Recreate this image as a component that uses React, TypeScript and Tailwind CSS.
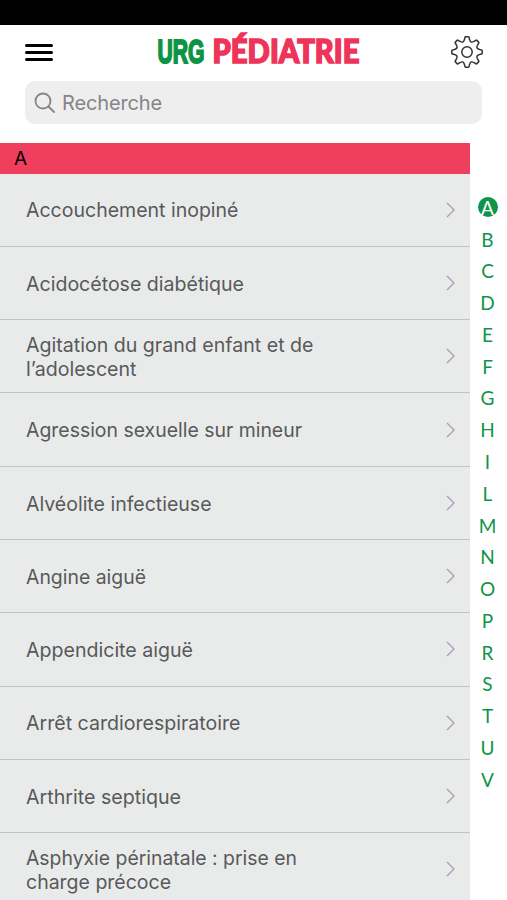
const ROWS = [
  { lines: ['Accouchement inopiné'], widths: [212.5] },
  { lines: ['Acidocétose diabétique'], widths: [218] },
  { lines: ['Agitation du grand enfant et de', 'l’adolescent'], widths: [287.5, 110.5] },
  { lines: ['Agression sexuelle sur mineur'], widths: [276] },
  { lines: ['Alvéolite infectieuse'], widths: [185.5] },
  { lines: ['Angine aiguë'], widths: [120] },
  { lines: ['Appendicite aiguë'], widths: [167] },
  { lines: ['Arrêt cardiorespiratoire'], widths: [214.5] },
  { lines: ['Arthrite septique'], widths: [155] },
  { lines: ['Asphyxie périnatale : prise en', 'charge précoce'], widths: [271, 145] },
];

const LETTERS = 'ABCDEFGHILMNOPRSTUV'.split('');

// Outline of an eight-toothed cog centred on the origin.
function cogPath() {
  const at = (deg: number, u: number, v: number) => {
    const a = (deg * Math.PI) / 180;
    const x = u * Math.cos(a) - v * Math.sin(a);
    const y = u * Math.sin(a) + v * Math.cos(a);
    return `${x.toFixed(2)} ${y.toFixed(2)}`;
  };
  let d = '';
  for (let i = 0; i < 8; i++) {
    const t = i * 45;
    d += `${i ? 'L' : 'M'}${at(t, 14.4, -2.1)}Q${at(t, 15.2, -2)} ${at(t, 15.2, -1.2)}`;
    d += `L${at(t, 15.2, 1.2)}Q${at(t, 15.2, 2)} ${at(t, 14.4, 2.1)}`;
    d += `L${at(t, 12.6, 2.5)}C${at(t, 11.4, 2.9)} ${at(t + 22.5, 10.8, -1)} ${at(t + 22.5, 10.8, 0)}`;
    d += `C${at(t + 22.5, 10.8, 1)} ${at(t + 45, 11.4, -2.9)} ${at(t + 45, 12.6, -2.5)}`;
  }
  return d + 'Z';
}

function Logo() {
  return (
    <svg className="h-[54px] w-[208px] overflow-visible" viewBox="0 0 208 54" role="img" aria-label="URG Pédiatrie">
      <text x="9.5" y="37.5" fontFamily="'Liberation Sans', sans-serif" fontWeight="700" fontSize="34" textLength="47" lengthAdjust="spacingAndGlyphs" fill="#0b9444" stroke="#0b9444" strokeWidth="2">URG</text>
      <text x="64.5" y="37.7" fontFamily="Lato, 'Liberation Sans', sans-serif" fontWeight="900" fontSize="33" textLength="147" lengthAdjust="spacingAndGlyphs" fill="#ee3459" stroke="#ee3459" strokeWidth="1.6">PÉDIATRIE</text>
    </svg>
  );
}

function Row({ lines, widths }: { lines: string[]; widths: number[] }) {
  return (
    <li className="flex h-[73.3px] shrink-0 items-center justify-between border-b border-[#c2c4c3] pr-[14px] pl-[26px]">
      <div>
        {lines.map((line, i) => (
          <svg key={line} className="block h-[24.5px] w-[300px] overflow-visible">
            <text x="0" y="19.5" textLength={widths[i]} lengthAdjust="spacingAndGlyphs" className="fill-[#58595a] font-['Inter','Liberation_Sans',sans-serif] text-[20px]">{line}</text>
          </svg>
        ))}
      </div>
      <svg className="h-4 w-[11px]" viewBox="0 0 11 16" fill="none" stroke="#ad9bb5" strokeWidth="1.3">
        <path d="M2 1l7 7-7 7" />
      </svg>
    </li>
  );
}

export default function App() {
  return (
    <div className="flex h-[900px] w-[507px] flex-col overflow-hidden bg-white font-['Inter','Liberation_Sans',sans-serif]">
      <div className="h-[25px] shrink-0 bg-black" />
      <header className="flex h-[56px] shrink-0 items-center justify-between pr-[23px] pb-[2px] pl-[25px]">
        <button aria-label="Menu" className="flex w-7 flex-col gap-1">
          <span className="h-[3px] rounded-full bg-black" />
          <span className="h-[3px] rounded-full bg-black" />
          <span className="h-[3px] rounded-full bg-black" />
        </button>
        <Logo />
        <button aria-label="Réglages">
          <svg className="size-[34px]" viewBox="-17 -17 34 34" fill="none" stroke="#343434" strokeWidth="1.5">
            <path d={cogPath()} />
            <circle r="5.2" />
          </svg>
        </button>
      </header>
      <div className="mr-[25px] ml-[25px] flex h-[43px] shrink-0 items-center rounded-[10px] bg-[#eeeeee] pl-[9px] text-[#858586]">
        <svg className="size-[22px]" viewBox="0 0 22 22" fill="none" stroke="currentColor" strokeWidth="1.8" strokeLinecap="round">
          <circle cx="9" cy="9" r="7.5" />
          <path d="M14.5 14.5l5.5 5.5" />
        </svg>
        <span className="ml-[6px] text-[20px] tracking-[-0.15px]">Recherche</span>
      </div>
      <div className="mt-[19px] flex min-h-0 flex-1">
        <main className="flex w-[470px] flex-col overflow-hidden bg-[#e9ebea]">
          <h2 className="flex h-[30.5px] shrink-0 items-center bg-[#f03e5f] pt-px pl-[14px] text-[19px] text-black">A</h2>
          <ul>
            {ROWS.map((row) => (
              <Row key={row.lines[0]} {...row} />
            ))}
          </ul>
        </main>
        <nav className="flex w-[35px] flex-col items-center pt-[48.5px] font-['Lato','Liberation_Sans',sans-serif] text-[19px] text-[#109447]">
          {LETTERS.map((letter, i) => (
            <span key={letter} className="flex h-[31.78px] items-center">
              <span className={i === 0 ? 'flex size-5 items-center justify-center rounded-full bg-[#109447] leading-none text-white' : 'leading-none'}>
                {letter}
              </span>
            </span>
          ))}
        </nav>
      </div>
    </div>
  );
}
